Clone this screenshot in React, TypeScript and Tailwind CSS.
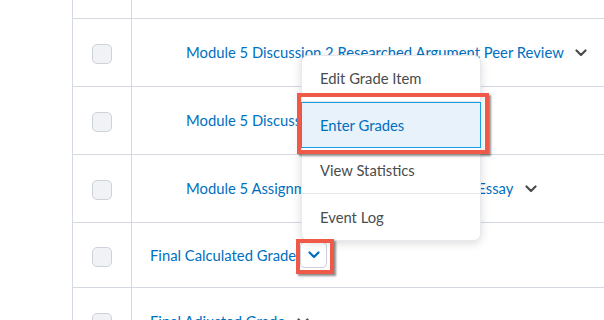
import React from "react";

function Chevron({ className }: { className?: string }) {
  return (
    <svg width="12" height="8" viewBox="0 0 12 8" className={className} fill="none">
      <path d="M1.5 1.5 L6 6 L10.5 1.5" stroke="currentColor" strokeWidth="2.2" strokeLinecap="round" strokeLinejoin="round" />
    </svg>
  );
}

function Checkbox() {
  return <div className="w-[20px] h-[20px] rounded-[5px] border border-[#cdd2da] bg-[#f1f2f5]" />;
}

type Row = { text: string; indent: boolean; h: string; active?: boolean };

const rows: Row[] = [
  { text: "Module 5 Discussion 2 Researched Argument Peer Review", indent: true, h: "h-[68px]" },
  { text: "Module 5 Discussion 2 Initial Post", indent: true, h: "h-[68px]" },
  { text: "Module 5 Assignment Researched Argument Essay", indent: true, h: "h-[68px]" },
  { text: "Final Calculated Grade", indent: false, h: "h-[65px]", active: true },
  { text: "Final Adjusted Grade", indent: false, h: "h-[68px]" },
];

export default function App() {
  return (
    <div className="relative w-[604px] h-[320px] overflow-hidden bg-white font-['Lato',sans-serif]">
      <div className="flex">
        <div className="w-[72px] shrink-0" />
        <div className="flex-1 border-l border-[#d3d8e1]">
          <div className="flex h-[19px] border-b border-[#d3d8e1]">
            <div className="w-[59px] border-r border-[#d3d8e1]" />
            <div className="flex-1" />
          </div>
          {rows.map((r, i) => (
            <div key={i} className={`flex ${r.h} border-b border-[#d3d8e1]`}>
              <div className="w-[59px] shrink-0 border-r border-[#d3d8e1] flex items-center justify-center pt-[3px]">
                <Checkbox />
              </div>
              <div className={`flex-1 flex items-center ${r.indent ? "pl-[54px]" : "pl-[18px]"}`}>
                <span className="text-[14.8px] text-[#006fbf] whitespace-nowrap">{r.text}</span>
                {r.active ? (
                  <div className="ml-[4px] w-[27px] h-[26px] rounded-[4px] border border-[#cdd2da] bg-white flex items-center justify-center text-[#006fbf]">
                    <Chevron />
                  </div>
                ) : (
                  <div className="ml-[4px] w-[27px] h-[26px] flex items-center justify-center text-[#494c4e]">
                    <Chevron />
                  </div>
                )}
              </div>
            </div>
          ))}
        </div>
      </div>

      <div className="absolute left-[301px] top-[55px] w-[180px] bg-white rounded-[7px] border border-[#e6e9ee] shadow-[0_2px_10px_rgba(0,0,0,0.15)] text-[14.8px] text-[#494c4e]">
        <div className="h-[46px] flex items-center pl-[18px] border-b border-[#e3e6eb]">Edit Grade Item</div>
        <div className="h-[46px] flex items-center pl-[18px] bg-[#e8f2fa] border border-[#1a9ee0] text-[#006fbf] -mx-px">Enter Grades</div>
        <div className="h-[46px] flex items-center pl-[18px] border-b border-[#e3e6eb]">View Statistics</div>
        <div className="h-[46px] flex items-center pl-[18px]">Event Log</div>
      </div>

      <div className="absolute left-[297px] top-[93px] w-[192px] h-[61px] border-[4px] border-[#ee5a47] shadow-[2px_2px_2px_rgba(0,0,0,0.45)]" />
      <div className="absolute left-[296px] top-[239px] w-[38px] h-[35px] border-[4px] border-[#ee5a47] shadow-[2px_2px_2px_rgba(0,0,0,0.45)]" />
    </div>
  );
}
